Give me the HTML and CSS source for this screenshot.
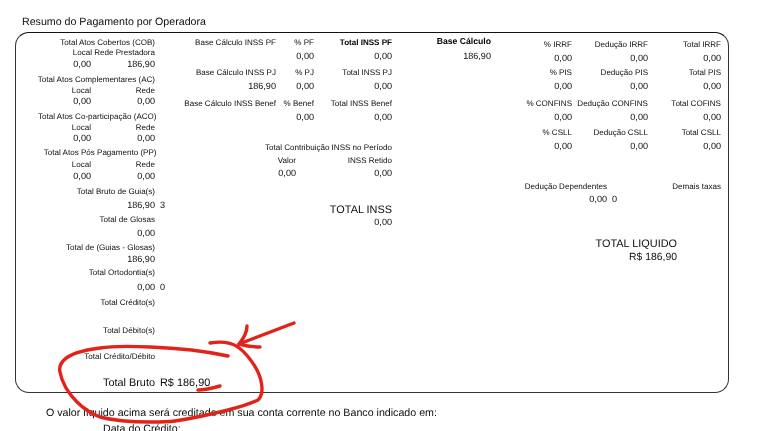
FILE: index.html
```html
<!DOCTYPE html>
<html lang="pt">
<head>
<meta charset="utf-8">
<title>Resumo do Pagamento por Operadora</title>
<link rel="stylesheet" href="styles.css">
</head>
<body>
<main class="page">
  <h1 class="title">Resumo do Pagamento por Operadora</h1>
  <section class="panel">
    <div class="col-left">
      <span class="wide">Total Atos Cobertos (COB)</span><i></i>
      <span class="wide">Local Rede Prestadora</span><i></i>
      <b class="val">0,00</b><b class="val">186,90</b><i></i>
      <span class="wide">Total Atos Complementares (AC)</span><i></i>
      <span>Local</span><span>Rede</span><i></i>
      <b class="val">0,00</b><b class="val">0,00</b><i></i>
      <span class="wide out">Total Atos Co-participação (ACO)</span><i></i>
      <span>Local</span><span>Rede</span><i></i>
      <b class="val">0,00</b><b class="val">0,00</b><i></i>
      <span class="wide out">Total Atos Pós Pagamento (PP)</span><i></i>
      <span>Local</span><span>Rede</span><i></i>
      <b class="val">0,00</b><b class="val">0,00</b><i></i>
      <span class="wide">Total Bruto de Guia(s)</span><i></i>
      <b class="val wide">186,90</b><b class="val count">3</b>
      <span class="wide">Total de Glosas</span><i></i>
      <b class="val wide">0,00</b><i></i>
      <span class="wide">Total de (Guias - Glosas)</span><i></i>
      <b class="val wide">186,90</b><i></i>
      <span class="wide">Total Ortodontia(s)</span><i></i>
      <b class="val wide">0,00</b><b class="val count">0</b>
      <span class="wide">Total Crédito(s)</span><i></i>
      <span class="wide">Total Débito(s)</span><i></i>
      <span class="wide">Total Crédito/Débito</span><i></i>
      <b class="big wide">Total Bruto</b><b class="big count">R$ 186,90</b>
    </div>

    <div class="col-mid">
      <div class="inss">
        <span>Base Cálculo INSS PF</span><span>% PF</span><span class="strong">Total INSS PF</span>
        <i></i><b class="val">0,00</b><b class="val">0,00</b>
        <span>Base Cálculo INSS PJ</span><span>% PJ</span><span>Total INSS PJ</span>
        <b class="val">186,90</b><b class="val">0,00</b><b class="val">0,00</b>
        <span>Base Cálculo INSS Benef</span><span>% Benef</span><span>Total INSS Benef</span>
        <i></i><b class="val">0,00</b><b class="val">0,00</b>
      </div>
      <div class="contrib">
        <span class="wide">Total Contribuição INSS no Período</span>
        <span>Valor</span><span>INSS Retido</span>
        <b class="val">0,00</b><b class="val">0,00</b>
        <b class="big wide">TOTAL INSS</b>
        <b class="val wide">0,00</b>
      </div>
    </div>

    <div class="col-base">
      <span class="base-head">Base Cálculo</span>
      <b class="val">186,90</b>
    </div>

    <div class="col-right">
      <div class="taxes">
        <span>% IRRF</span><span>Dedução IRRF</span><span>Total IRRF</span>
        <b class="val">0,00</b><b class="val">0,00</b><b class="val">0,00</b>
        <span>% PIS</span><span>Dedução PIS</span><span>Total PIS</span>
        <b class="val">0,00</b><b class="val">0,00</b><b class="val">0,00</b>
        <span>% CONFINS</span><span>Dedução CONFINS</span><span>Total COFINS</span>
        <b class="val">0,00</b><b class="val">0,00</b><b class="val">0,00</b>
        <span>% CSLL</span><span>Dedução CSLL</span><span>Total CSLL</span>
        <b class="val">0,00</b><b class="val">0,00</b><b class="val">0,00</b>
      </div>
      <div class="extras">
        <span>Dedução Dependentes</span><i></i><span>Demais taxas</span>
        <b class="val">0,00</b><b class="val">0</b><i></i>
      </div>
      <div class="net">
        <b class="big">TOTAL LIQUIDO</b>
        <b class="net-value">R$ 186,90</b>
      </div>
    </div>
  </section>
  <p class="note">O valor líquido acima será creditado em sua conta corrente no Banco indicado em:</p>
  <p class="date">Data do Crédito:</p>
</main>

<svg class="ink" viewBox="0 0 764 431" aria-hidden="true">
  <path d="M228 356C205 351 178 348 150 347C128 346 112 346 100 348C84 350 70 354 64 360C60 364 59 368 60 372C62 383 68 393 77 402C84 409 92 414 100 417C115 421 130 422 150 422C160 422 168 422 175 421C195 418 212 414 228 410C240 407 250 404 258 400C261 397 262 393 262 389C262 382 260 376 257 370C252 361 246 353 238 347C232 343 222 341 210 343"/>
  <path d="M198 390C206 390 213 388 220 386"/>
  <path d="M294 323L239 344"/>
  <path d="M247 326C247 332 244 338 239 344C246 346 253 347 260 347"/>
</svg>
</body>
</html>
```
FILE: styles.css
```css
* { box-sizing: border-box; }
html, body { margin: 0; height: 431px; overflow: hidden; background: #fff; }
body {
  position: relative;
  font-family: "Liberation Sans", Arial, sans-serif;
  color: #0d0d0d;
  text-rendering: geometricPrecision;
}
.page { padding: 16px 0 0 15px; filter: blur(0.2px); }
.title {
  margin: 0 0 3px 7px;
  font-size: 10.65px;
  font-weight: 400;
  line-height: 13px;
}
span, b, i { font-style: normal; font-weight: 400; white-space: nowrap; line-height: 12px; justify-self: end; }
span { font-size: 8.05px; line-height: 14px; }
.val { font-size: 9.1px; }
.big { font-size: 10.9px; line-height: 13px; }
.wide { grid-column: 1 / 3; }
.count { justify-self: start; padding-left: 5px; }
.out { margin-right: -1.5px; }
.strong { font-weight: 700; color: #000; }

.panel {
  display: flex;
  width: 714px;
  height: 361px;
  border: 1.4px solid #333;
  border-top-color: #111;
  border-radius: 14px;
}
.col-left {
  display: grid;
  width: 150px;
  padding-top: 3px;
  grid-template-columns: 75px 64px 11px;
  grid-template-rows: 10px 12px 15px 11px 11px 15px 11px 11px 14px 12px 12px 15px 14px 14px 14px 13.5px 12.5px 13px 15px 15px 28px 26px 27px 14px;
  align-items: start;
}

.col-mid { display: flex; flex-direction: column; width: 226px; padding-top: 3px; }
.inss {
  display: grid;
  grid-template-columns: 110px 38px 78px;
  grid-template-rows: 14px 16px 14px 17px 14px 30px;
  align-items: start;
}
.contrib {
  display: grid;
  grid-template-columns: 130px 96px;
  grid-template-rows: 13px 13px 37px 12px 12px;
  align-items: start;
}

.col-base { display: flex; flex-direction: column; align-items: flex-end; width: 99px; padding-top: 2px; gap: 3px; }
.base-head { font-size: 8.67px; font-weight: 700; line-height: 12px; color: #000; }

.col-right { display: flex; flex-direction: column; width: 230px; padding-top: 5px; }
.taxes {
  display: grid;
  grid-template-columns: 81px 76px 73px;
  grid-template-rows: 14px 14px 14px 17px 14px 15px 14px 40px;
  align-items: start;
}
.extras {
  display: grid;
  grid-template-columns: 116px 10px 104px;
  grid-template-rows: 13px 45px;
  align-items: start;
}
.net { display: flex; flex-direction: column; align-items: flex-end; width: 186px; }
.net-value { font-size: 10.4px; line-height: 13px; }

.note { margin: 14px 0 0 31px; font-size: 10.66px; line-height: 13px; }
.date { margin: 3px 0 0 88px; font-size: 10.66px; line-height: 13px; }

.ink {
  position: absolute;
  inset: 0;
  width: 764px;
  height: 431px;
  fill: none;
  stroke: #e2231a;
  stroke-width: 3.4;
  stroke-linecap: round;
  stroke-linejoin: round;
}
```
